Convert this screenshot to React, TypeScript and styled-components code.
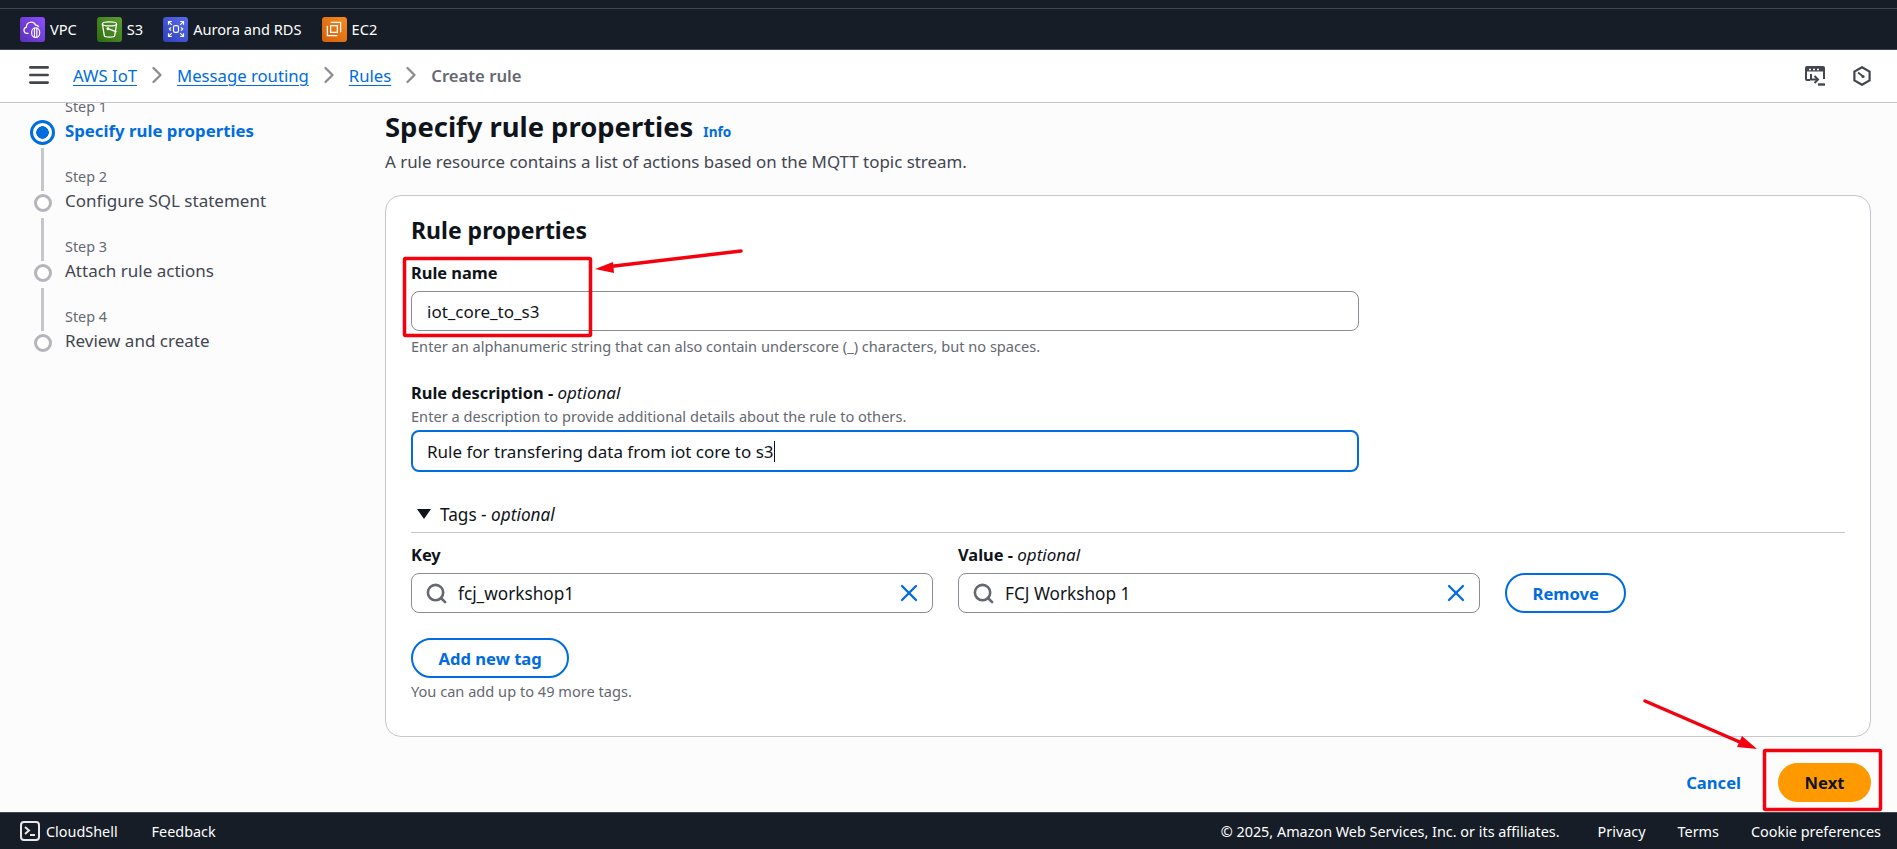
import React from 'react';
import styled, { createGlobalStyle } from 'styled-components';
import { Search, X, Menu, ChevronRight } from 'lucide-react';

const GlobalStyle = createGlobalStyle`
  html, body {
    margin: 0;
    padding: 0;
    height: 100%;
    overflow: hidden;
    background: #fcfcfd;
    font-family: "Noto Sans", "Open Sans", sans-serif;
    color: #0f141a;
  }
  * { box-sizing: border-box; }
`;

const Page = styled.div`
  position: relative;
  display: flex;
  flex-direction: column;
  width: 1897px;
  height: 849px;
  overflow: hidden;
`;

const TopStrip = styled.div`
  height: 9px;
  background: #161d26;
  border-bottom: 1px solid #414750;
`;

const Shortcuts = styled.div`
  display: flex;
  align-items: center;
  height: 41px;
  padding: 0 0 0 20px;
  background: #161d26;
  border-bottom: 1px solid #414750;
`;

const Shortcut = styled.div<{ $gap: number }>`
  display: flex;
  align-items: center;
  gap: 5px;
  margin-right: ${p => p.$gap}px;
  color: #fff;
  font-size: 14.6px;
`;

const Tile = styled.div<{ $from: string; $to: string }>`
  display: flex;
  align-items: center;
  justify-content: center;
  width: 25px;
  height: 25px;
  border-radius: 3px;
  background: linear-gradient(45deg, ${p => p.$from}, ${p => p.$to});
`;

const Crumbs = styled.div`
  display: flex;
  align-items: center;
  height: 53px;
  padding: 0 26px 2px 26px;
  background: #fff;
  border-bottom: 1px solid #c6c6cd;
  color: #424650;
`;

const CrumbLink = styled.a`
  color: #006ce0;
  font-size: 16.7px;
  text-decoration: underline;
  text-underline-offset: 3px;
  text-decoration-thickness: 1px;
`;

const CrumbCurrent = styled.span`
  color: #656871;
  font-size: 16.7px;
  font-weight: 600;
`;

const CrumbSep = styled.span`
  display: flex;
  width: 40px;
  justify-content: center;
  color: #8c8c94;
`;

const MenuButton = styled.span`
  display: flex;
  width: 47px;
  color: #424650;
`;

const RightIcons = styled.div`
  display: flex;
  align-items: center;
  gap: 28px;
  margin: 2px 0 0 auto;
  color: #424650;
`;

const Pane = styled.div`
  flex: 1;
  display: flex;
  min-height: 0;
  overflow: hidden;
`;

const Side = styled.nav`
  flex: 0 0 385px;
  margin-top: -28px;
  padding-left: 30px;
`;

const StepRow = styled.div`
  display: flex;
  height: 70px;
  gap: 10px;
`;

const Marker = styled.div`
  flex: 0 0 25px;
  display: flex;
  flex-direction: column;
  align-items: center;
`;

const Rail = styled.div<{ $hidden?: boolean }>`
  flex: 1;
  width: 3px;
  margin: 3px 0;
  background: ${p => (p.$hidden ? 'transparent' : '#c6c6cd')};
`;

const Dot = styled.div<{ $active?: boolean }>`
  border-radius: 50%;
  ${p =>
    p.$active
      ? `width: 25px; height: 25px; border: 3px solid #006ce0; background: radial-gradient(circle, #006ce0 0 6px, #fff 6.5px);`
      : `width: 18px; height: 18px; margin-bottom: 3px; border: 3px solid #b4b4bb; background: #fff;`}
`;

const StepText = styled.div`
  display: flex;
  flex-direction: column;
  justify-content: flex-end;
  padding-bottom: 4px;
`;

const StepLabel = styled.div`
  height: 24px;
  line-height: 20px;
  color: #656871;
  font-size: 14.4px;
`;

const StepTitle = styled.div<{ $active?: boolean }>`
  height: 20px;
  line-height: 20px;
  font-size: ${p => (p.$active ? 16.8 : 17)}px;
  color: ${p => (p.$active ? '#006ce0' : '#424650')};
  font-weight: ${p => (p.$active ? 700 : 400)};
`;

const Content = styled.main`
  flex: 1;
  padding: 9px 26px 0 0;
`;

const PageTitle = styled.h1`
  display: flex;
  align-items: baseline;
  gap: 10px;
  margin: 0;
  height: 30px;
  line-height: 30px;
  font-size: 27.4px;
  font-weight: 700;
`;

const InfoLink = styled.a`
  color: #006ce0;
  font-size: 13.6px;
  font-weight: 700;
`;

const PageDesc = styled.p`
  margin: 10px 0 23px;
  line-height: 20px;
  font-size: 16.9px;
  color: #424650;
`;

const Card = styled.section`
  height: 542px;
  padding: 21px 25px 0;
  background: #fff;
  border: 1px solid #c6c6cd;
  border-radius: 16px;
`;

const CardTitle = styled.h2`
  margin: 0 0 20px;
  height: 26px;
  line-height: 26px;
  font-size: 23px;
  font-weight: 700;
`;

const Label = styled.div`
  height: 20px;
  line-height: 20px;
  font-size: 16.4px;
  font-weight: 700;
  em { font-weight: 400; font-size: 17px; }
`;

const Hint = styled.div<{ $top: number; $bottom: number }>`
  height: 16px;
  line-height: 16px;
  margin: ${p => p.$top}px 0 ${p => p.$bottom}px;
  font-size: 14.6px;
  color: #656871;
`;

const Field = styled.div<{ $focused?: boolean }>`
  display: flex;
  align-items: center;
  width: 948px;
  height: ${p => (p.$focused ? 42 : 40)}px;
  margin-top: ${p => (p.$focused ? 0 : 8)}px;
  padding-left: ${p => (p.$focused ? 14 : 15)}px;
  background: #fff;
  border: ${p => (p.$focused ? '2px solid #006ce0' : '1px solid #8c8c94')};
  border-radius: 8px;
  font-size: 17px;
`;

const Caret = styled.span`
  width: 1px;
  height: 21px;
  background: #0f141a;
`;

const TagsHeader = styled.div`
  display: flex;
  align-items: center;
  gap: 9px;
  height: 24px;
  margin-top: 30px;
  padding: 0 0 0 6px;
  font-size: 17.2px;
  em { font-style: italic; }
`;

const Caretdown = styled.span`
  width: 0;
  height: 0;
  border-left: 7px solid transparent;
  border-right: 7px solid transparent;
  border-top: 10px solid #0f141a;
`;

const Divider = styled.hr`
  margin: 6px 0 12px;
  border: 0;
  border-top: 1px solid #c6c6cd;
`;

const TagGrid = styled.div`
  display: grid;
  grid-template-columns: 522px 522px auto;
  column-gap: 25px;
`;

const TagField = styled.div`
  display: flex;
  align-items: center;
  height: 40px;
  margin-top: 8px;
  padding: 0 9px 0 13px;
  border: 1px solid #8c8c94;
  border-radius: 8px;
  font-size: 17.2px;
  color: #0f141a;
  span { flex: 1; margin-left: 10px; }
`;

const OutlineButton = styled.button`
  height: 40px;
  padding: 0 25.5px;
  background: #fff;
  border: 2px solid #006ce0;
  border-radius: 20px;
  color: #006ce0;
  font-family: inherit;
  font-size: 16.6px;
  font-weight: 700;
`;

const ButtonCell = styled.div`
  align-self: end;
`;

const AddRow = styled.div`
  margin-top: 25px;
`;

const Actions = styled.div`
  display: flex;
  align-items: center;
  justify-content: flex-end;
  gap: 37px;
  margin-top: 26px;
`;

const LinkButton = styled.a`
  color: #006ce0;
  font-size: 16.6px;
  font-weight: 700;
`;

const PrimaryButton = styled.button`
  width: 93px;
  height: 39px;
  background: #ff9900;
  border: 0;
  border-radius: 20px;
  color: #0f141a;
  font-family: inherit;
  font-size: 16.6px;
  font-weight: 700;
`;

const Footer = styled.footer`
  display: flex;
  align-items: center;
  height: 37px;
  padding: 0 16px 0 20px;
  background: #161d26;
  border-top: 1px solid #414750;
  color: #fff;
  font-size: 14.4px;
`;

const FootLeft = styled.div`
  display: flex;
  align-items: center;
  gap: 6px;
  margin-right: 34px;
`;

const FootRight = styled.div`
  display: flex;
  gap: 32px;
  margin-left: auto;
`;

const Copyright = styled.span`
  margin-right: 6px;
`;

const Notes = styled.svg`
  position: absolute;
  inset: 0;
  pointer-events: none;
`;

const VpcIcon = () => (
  <svg width="19" height="19" viewBox="0 0 24 24" fill="none" stroke="#fff" strokeWidth="1.5">
    <path d="M7 17H5a4 4 0 0 1-.6-7.9A6 6 0 0 1 16 6.6a4 4 0 0 1 4 2.4" />
    <rect x="11" y="10" width="10" height="12" rx="5" />
    <path d="M14.5 10v12M17.5 10v12" />
  </svg>
);

const S3Icon = () => (
  <svg width="19" height="19" viewBox="0 0 24 24" fill="none" stroke="#fff" strokeWidth="1.6">
    <ellipse cx="12" cy="5" rx="9" ry="2.5" />
    <path d="M3 5l2.5 15c.5 2 12.5 2 13 0L21 5" />
    <path d="M10 11l11 4" />
    <circle cx="10" cy="11" r="1" fill="#fff" />
  </svg>
);

const AuroraIcon = () => (
  <svg width="20" height="20" viewBox="0 0 24 24" fill="none" stroke="#fff" strokeWidth="1.4">
    <rect x="9" y="8" width="6" height="8" rx="2" />
    <path d="M3 7V3h4M17 3h4v4M3 17v4h4M21 17v4h-4" />
    <path d="M3 3l4 4M21 3l-4 4M3 21l4-4M21 21l-4-4" />
    <path d="M6 10l-2 2 2 2M18 10l2 2-2 2" />
  </svg>
);

const Ec2Icon = () => (
  <svg width="20" height="20" viewBox="0 0 24 24" fill="none" stroke="#fff" strokeWidth="1.5">
    <rect x="8" y="8" width="8" height="8" />
    <path d="M8 4h12v12M16 20H4V8" />
  </svg>
);

const ConsoleIcon = () => (
  <svg width="20" height="20" viewBox="0 0 20 20" fill="none" stroke="currentColor" strokeWidth="2">
    <path d="M5 14H2a1 1 0 0 1-1-1V2a1 1 0 0 1 1-1h16a1 1 0 0 1 1 1v11" />
    <path d="M1 3.5h18" strokeWidth="4" />
    <path d="M4 3.5h2M8 3.5h2M12 3.5h2" stroke="#fff" strokeWidth="1.6" />
    <path d="M6 8v5.5h6" />
    <path d="M9.5 10l3.5 3.5L9.5 17" />
    <path d="M13 18.5h7" strokeWidth="2.4" />
  </svg>
);

const HexIcon = () => (
  <svg width="18" height="20" viewBox="0 0 18 20" fill="none" stroke="currentColor" strokeWidth="2.2">
    <path d="M9 1.2l7.6 4.4v8.8L9 18.8l-7.6-4.4V5.6z" />
    <path d="M5 6.5L9.5 10" strokeWidth="1.8" />
    <circle cx="10" cy="10.5" r="1.6" fill="currentColor" stroke="none" />
  </svg>
);

const ShellIcon = () => (
  <svg width="20" height="20" viewBox="0 0 20 20" fill="none" stroke="#e8e8ec" strokeWidth="2">
    <rect x="1" y="1" width="18" height="18" rx="3" />
    <path d="M5 6l4 3.5L5 13M10 14h5" />
  </svg>
);

const steps = [
  { n: 1, title: 'Specify rule properties', active: true },
  { n: 2, title: 'Configure SQL statement' },
  { n: 3, title: 'Attach rule actions' },
  { n: 4, title: 'Review and create' },
];

const crumbs = ['AWS IoT', 'Message routing', 'Rules'];

const TagInput = ({ value }: { value: string }) => (
  <TagField>
    <Search size={23} color="#656871" strokeWidth={2.7} />
    <span>{value}</span>
    <X size={28} color="#006ce0" strokeWidth={2} />
  </TagField>
);

export default function App() {
  return (
    <Page>
      <GlobalStyle />
      <TopStrip />
      <Shortcuts>
        <Shortcut $gap={20}>
          <Tile $from="#5a30b5" $to="#8c4fff"><VpcIcon /></Tile>VPC
        </Shortcut>
        <Shortcut $gap={20}>
          <Tile $from="#2e6b12" $to="#5a9e2f"><S3Icon /></Tile>S3
        </Shortcut>
        <Shortcut $gap={20}>
          <Tile $from="#2e3fb8" $to="#5a6cf0"><AuroraIcon /></Tile>Aurora and RDS
        </Shortcut>
        <Shortcut $gap={0}>
          <Tile $from="#d2600c" $to="#f58a1f"><Ec2Icon /></Tile>EC2
        </Shortcut>
      </Shortcuts>
      <Crumbs>
        <MenuButton><Menu size={26} strokeWidth={2.4} /></MenuButton>
        {crumbs.map(c => (
          <React.Fragment key={c}>
            <CrumbLink>{c}</CrumbLink>
            <CrumbSep><ChevronRight size={28} strokeWidth={2} /></CrumbSep>
          </React.Fragment>
        ))}
        <CrumbCurrent>Create rule</CrumbCurrent>
        <RightIcons>
          <ConsoleIcon />
          <HexIcon />
        </RightIcons>
      </Crumbs>
      <Pane>
        <Side>
          {steps.map(s => (
            <StepRow key={s.n}>
              <Marker>
                <Rail $hidden={s.n === 1} />
                <Dot $active={s.active} />
              </Marker>
              <StepText>
                <StepLabel>Step {s.n}</StepLabel>
                <StepTitle $active={s.active}>{s.title}</StepTitle>
              </StepText>
            </StepRow>
          ))}
        </Side>
        <Content>
          <PageTitle>
            Specify rule properties <InfoLink>Info</InfoLink>
          </PageTitle>
          <PageDesc>A rule resource contains a list of actions based on the MQTT topic stream.</PageDesc>
          <Card>
            <CardTitle>Rule properties</CardTitle>
            <Label>Rule name</Label>
            <Field>iot_core_to_s3</Field>
            <Hint $top={7} $bottom={29}>Enter an alphanumeric string that can also contain underscore (_) characters, but no spaces.</Hint>
            <Label>Rule description - <em>optional</em></Label>
            <Hint $top={5} $bottom={6}>Enter a description to provide additional details about the rule to others.</Hint>
            <Field $focused>Rule for transfering data from iot core to s3<Caret /></Field>
            <TagsHeader>
              <Caretdown />
              <span>Tags - <em>optional</em></span>
            </TagsHeader>
            <Divider />
            <TagGrid>
              <div>
                <Label>Key</Label>
                <TagInput value="fcj_workshop1" />
              </div>
              <div>
                <Label>Value - <em>optional</em></Label>
                <TagInput value="FCJ Workshop 1" />
              </div>
              <ButtonCell>
                <OutlineButton>Remove</OutlineButton>
              </ButtonCell>
            </TagGrid>
            <AddRow>
              <OutlineButton>Add new tag</OutlineButton>
            </AddRow>
            <Hint $top={5} $bottom={0}>You can add up to 49 more tags.</Hint>
          </Card>
          <Actions>
            <LinkButton>Cancel</LinkButton>
            <PrimaryButton>Next</PrimaryButton>
          </Actions>
        </Content>
      </Pane>
      <Footer>
        <FootLeft><ShellIcon />CloudShell</FootLeft>
        <span>Feedback</span>
        <FootRight>
          <Copyright>© 2025, Amazon Web Services, Inc. or its affiliates.</Copyright>
          <span>Privacy</span>
          <span>Terms</span>
          <span>Cookie preferences</span>
        </FootRight>
      </Footer>
      <Notes width="1897" height="849" viewBox="0 0 1897 849" fill="none">
        <rect x="404.5" y="258.5" width="186" height="77" rx="1" stroke="#f5000e" strokeWidth="3.5" />
        <path d="M741 251L610 266.5" stroke="#f5000e" strokeWidth="3.5" strokeLinecap="round" />
        <path d="M595 269L613 262L614 273Z" fill="#f5000e" />
        <rect x="1764.5" y="750.5" width="116" height="59" rx="1" stroke="#f5000e" strokeWidth="3.5" />
        <path d="M1645 701L1742 743" stroke="#f5000e" strokeWidth="3.5" strokeLinecap="round" />
        <path d="M1757 749L1742 736L1737 747Z" fill="#f5000e" />
      </Notes>
    </Page>
  );
}
